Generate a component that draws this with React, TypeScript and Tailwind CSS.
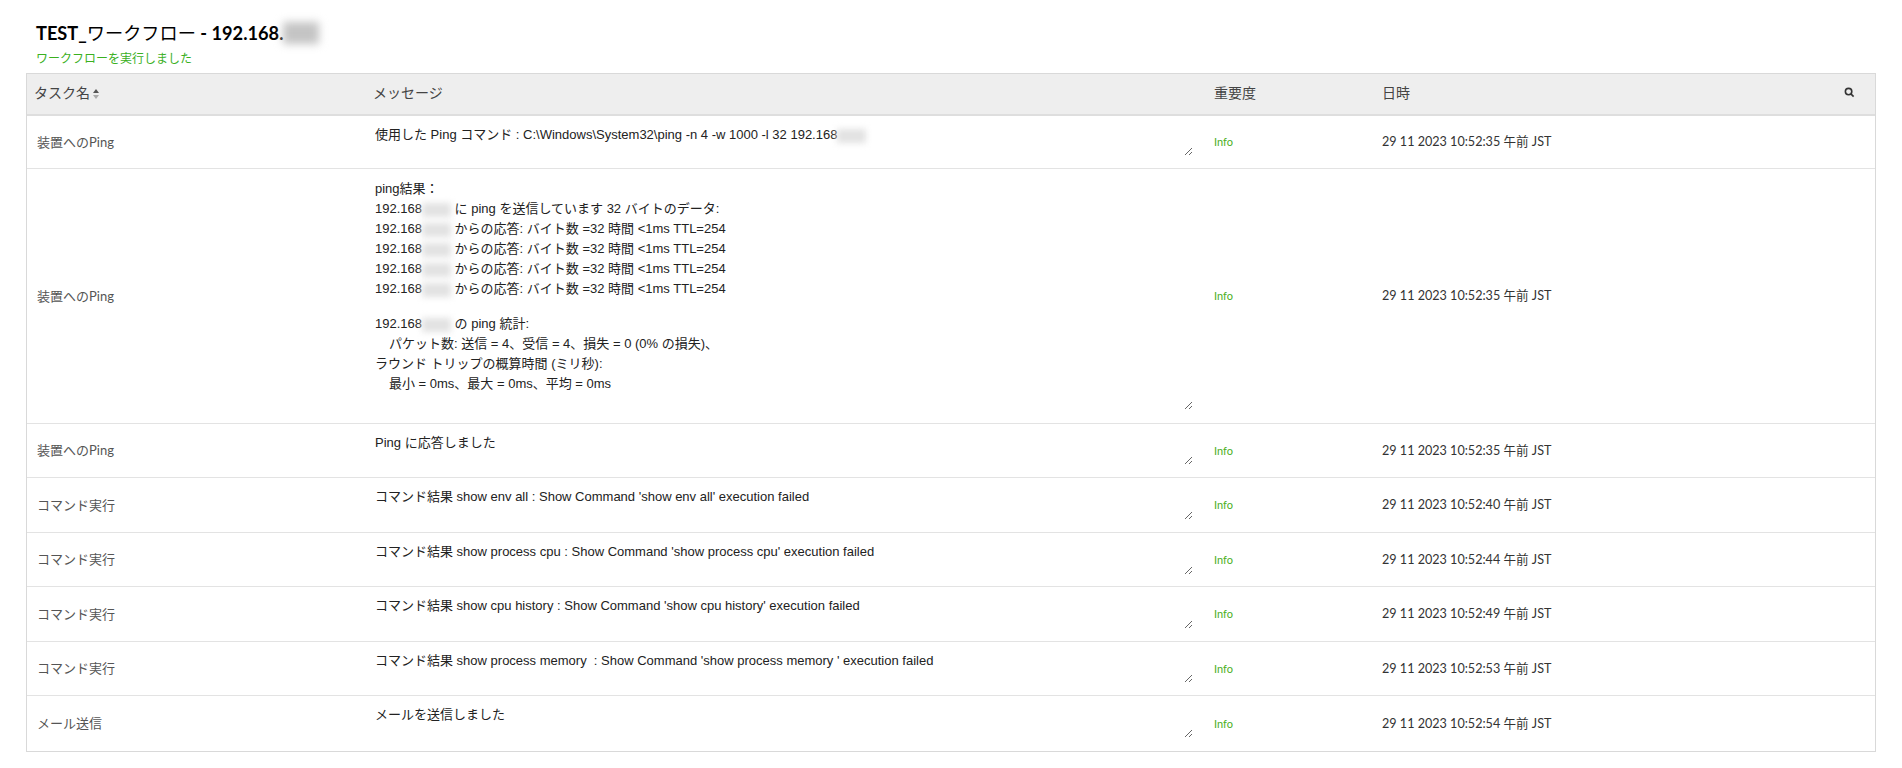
import React from "react";

const CJK = "font-['Lato','Noto_Sans_CJK_JP',sans-serif]";

const Blur = ({ w = "w-[29px]" }: { w?: string }) => (
  <span className={`inline-block ${w} h-[14px] align-middle bg-[#e2e2e2] blur-[3px]`} />
);

const Message = ({ children, h }: { children: React.ReactNode; h: string }) => (
  <div className={`${h} ml-[3px] w-[818px] resize overflow-hidden whitespace-pre-wrap pt-[8px] text-[13px] leading-[20px] text-[#222] font-['Liberation_Sans','Noto_Sans_CJK_JP',sans-serif]`}>
    {children}
  </div>
);

const PingLine = () => (
  <div>
    192.168
    <Blur /> からの応答: バイト数 =32 時間 &lt;1ms TTL=254
  </div>
);

const rows: { task: string; h: string; msgH: string; time: string; msg: React.ReactNode }[] = [
  {
    task: "装置へのPing",
    h: "h-[53px]",
    msgH: "h-[39px]",
    time: "29 11 2023 10:52:35 午前 JST",
    msg: (
      <>
        使用した Ping コマンド : C:\Windows\System32\ping -n 4 -w 1000 -l 32 192.168
        <Blur />
      </>
    ),
  },
  {
    task: "装置へのPing",
    h: "h-[255px]",
    msgH: "h-[240px]",
    time: "29 11 2023 10:52:35 午前 JST",
    msg: (
      <div className="pt-[1px]">
        <div>ping結果：</div>
        <div>
          192.168
          <Blur /> に ping を送信しています 32 バイトのデータ:
        </div>
        <PingLine />
        <PingLine />
        <PingLine />
        <PingLine />
        <div className="mt-[15px]">
          192.168
          <Blur /> の ping 統計:
        </div>
        <div className="pl-[14px]">パケット数: 送信 = 4、受信 = 4、損失 = 0 (0% の損失)、</div>
        <div>ラウンド トリップの概算時間 (ミリ秒):</div>
        <div className="pl-[14px]">最小 = 0ms、最大 = 0ms、平均 = 0ms</div>
      </div>
    ),
  },
  { task: "装置へのPing", h: "h-[54px]", msgH: "h-[40px]", time: "29 11 2023 10:52:35 午前 JST", msg: "Ping に応答しました" },
  { task: "コマンド実行", h: "h-[55px]", msgH: "h-[41px]", time: "29 11 2023 10:52:40 午前 JST", msg: "コマンド結果 show env all : Show Command 'show env all' execution failed" },
  { task: "コマンド実行", h: "h-[54px]", msgH: "h-[41px]", time: "29 11 2023 10:52:44 午前 JST", msg: "コマンド結果 show process cpu : Show Command 'show process cpu' execution failed" },
  { task: "コマンド実行", h: "h-[55px]", msgH: "h-[41px]", time: "29 11 2023 10:52:49 午前 JST", msg: "コマンド結果 show cpu history : Show Command 'show cpu history' execution failed" },
  { task: "コマンド実行", h: "h-[54px]", msgH: "h-[40px]", time: "29 11 2023 10:52:53 午前 JST", msg: "コマンド結果 show process memory  : Show Command 'show process memory ' execution failed" },
  { task: "メール送信", h: "h-[55px]", msgH: "h-[41px]", time: "29 11 2023 10:52:54 午前 JST", msg: "メールを送信しました" },
];

export default function App() {
  return (
    <div className={`h-[768px] w-[1902px] overflow-hidden bg-white ${CJK}`}>
      <div className="px-[36px] pt-[21px]">
        <h1 className="flex items-center text-[18.2px] leading-[24px] font-bold text-black">
          TEST_<span className="font-normal">ワークフロー</span>&nbsp;- 192.168.
          <span className="inline-block h-[22px] w-[36px] bg-[#c4c4c4] blur-[4px]" />
        </h1>
        <div className="mt-[6px] h-[22px] text-[12px] leading-[16px] text-[#3ab01e]">ワークフローを実行しました</div>
      </div>

      <div className="ml-[26px] w-[1850px] border border-[#d9d9d9]">
        <div className="flex h-[42px] items-center border-b-2 border-[#dedede] bg-[#eeeeee] pb-[4px] text-[14px] text-[#444]">
          <div className="flex w-[345px] items-center pl-[7px]">
            タスク名
            <svg width="8" height="12" viewBox="0 0 8 12" className="ml-[2px] mt-[3px]">
              <path d="M4 1 L7 5 L1 5 Z" fill="#555" />
              <path d="M4 11 L7 7 L1 7 Z" fill="#aaa" />
            </svg>
          </div>
          <div className="w-[842px] pl-[1px]">メッセージ</div>
          <div className="w-[167px]">重要度</div>
          <div className="flex-1 pl-[1px]">日時</div>
          <svg width="11" height="11" viewBox="0 0 24 24" fill="none" stroke="#333" strokeWidth="3.5" className="mr-[20px]">
            <circle cx="10" cy="10" r="7" />
            <path d="M15 15 L21 21" />
          </svg>
        </div>

        {rows.map((r, i) => (
          <div key={i} className={`flex ${r.h} items-center border-b border-[#e3e3e3] last:border-b-0`}>
            <div className="w-[345px] pl-[10px] pt-[1px] text-[13px] text-[#555]">{r.task}</div>
            <div className="w-[842px] self-start pt-[1px]">
              <Message h={r.msgH}>{r.msg}</Message>
            </div>
            <div className="w-[167px] pt-[1px] text-[11px] text-[#4caf1e]">Info</div>
            <div className="flex-1 pl-[1px] pt-[1px] text-[12.6px] text-[#333]">{r.time}</div>
          </div>
        ))}
      </div>
    </div>
  );
}
